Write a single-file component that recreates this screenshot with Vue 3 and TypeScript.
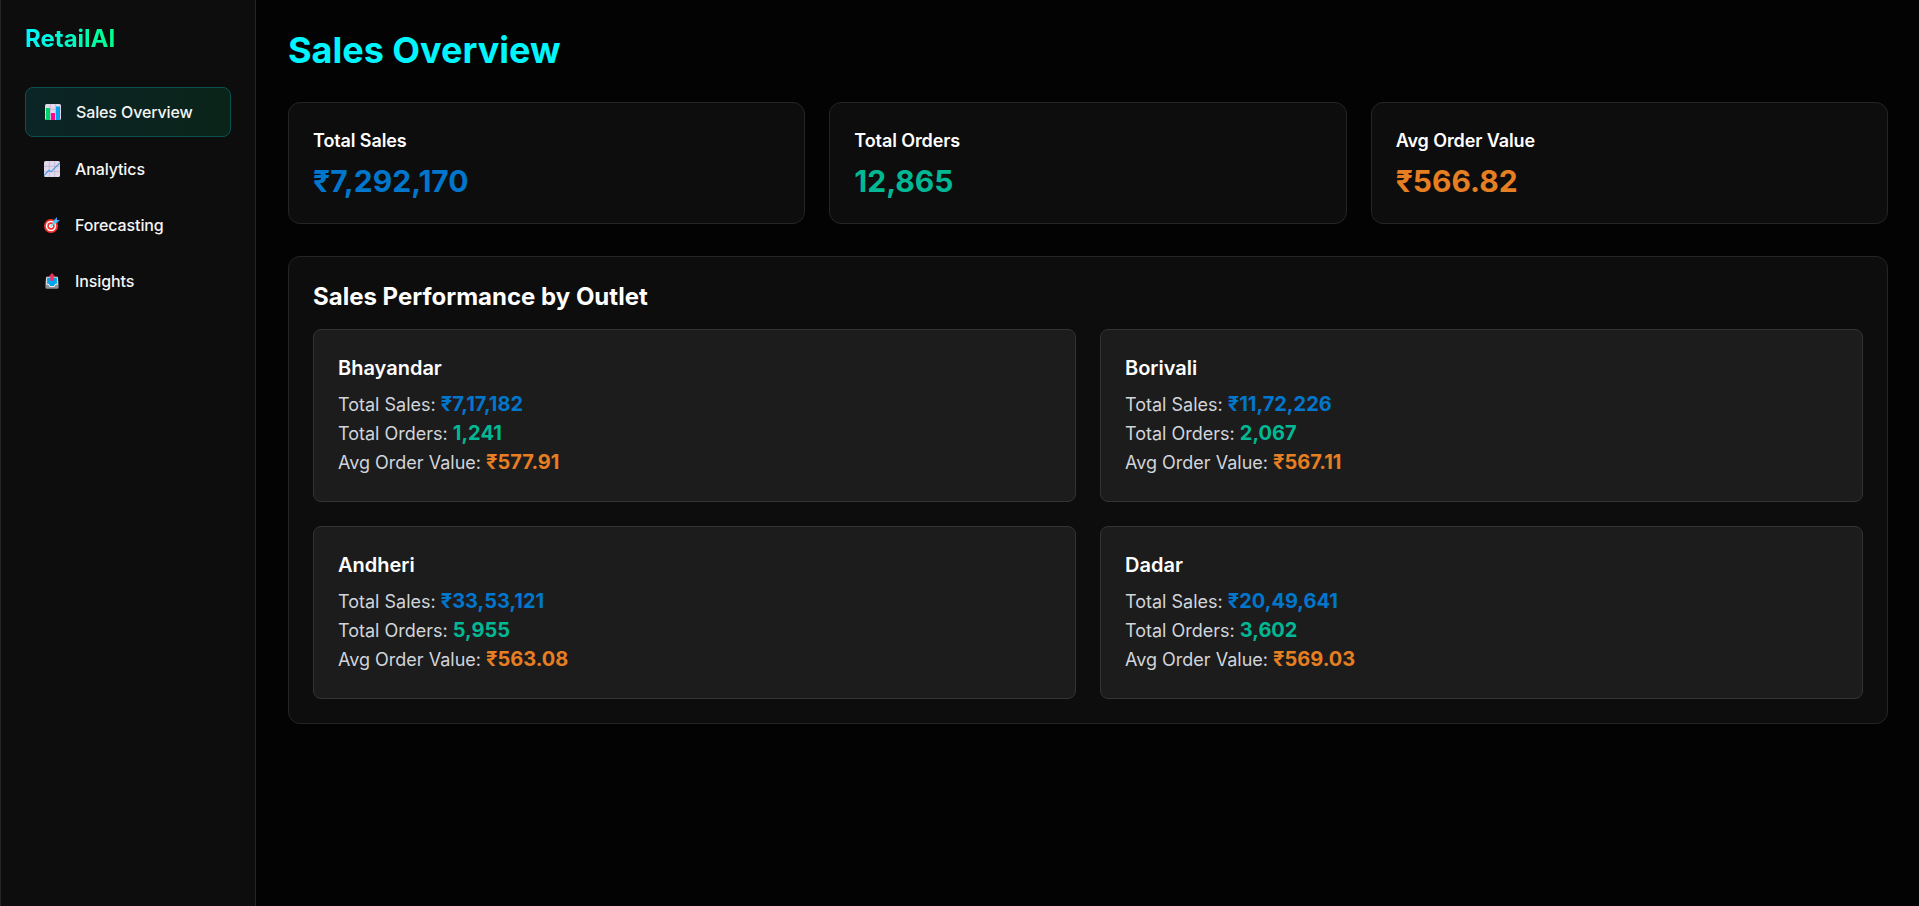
<script setup lang="ts">
interface Stat { label: string; value: string; tone: string }
interface Outlet { name: string; sales: string; orders: string; average: string }

const nav: { id: string; label: string }[] = [
  { id: 'overview', label: 'Sales Overview' },
  { id: 'analytics', label: 'Analytics' },
  { id: 'forecasting', label: 'Forecasting' },
  { id: 'insights', label: 'Insights' },
]
const active = 'overview'

const stats: Stat[] = [
  { label: 'Total Sales', value: '₹7,292,170', tone: 'blue' },
  { label: 'Total Orders', value: '12,865', tone: 'green' },
  { label: 'Avg Order Value', value: '₹566.82', tone: 'orange' },
]

const outlets: Outlet[] = [
  { name: 'Bhayandar', sales: '₹7,17,182', orders: '1,241', average: '₹577.91' },
  { name: 'Borivali', sales: '₹11,72,226', orders: '2,067', average: '₹567.11' },
  { name: 'Andheri', sales: '₹33,53,121', orders: '5,955', average: '₹563.08' },
  { name: 'Dadar', sales: '₹20,49,641', orders: '3,602', average: '₹569.03' },
]
</script>

<template>
  <div class="layout">
    <aside class="sidebar">
      <div class="brand">RetailAI</div>
      <nav class="nav">
        <a v-for="item in nav" :key="item.id" class="nav-item" :class="{ active: item.id === active }">
          <svg v-if="item.id === 'overview'" class="icon" viewBox="0 0 16 16">
            <rect width="16" height="16" rx="1.6" fill="#e3d9ea" />
            <path d="M0 5.3h16M0 10.6h16M5.3 0v16M10.6 0v16" stroke="#bcaec9" stroke-width=".7" />
            <rect x="1" y="4" width="4" height="12" fill="#00d26a" />
            <rect x="6" y="9" width="4" height="7" fill="#f70a8d" />
            <rect x="11" y="2.5" width="4" height="13.5" fill="#00a6ed" />
          </svg>
          <svg v-else-if="item.id === 'analytics'" class="icon" viewBox="0 0 16 16">
            <rect width="16" height="16" rx="1.6" fill="#e1d8ec" />
            <path d="M0 5.3h16M0 10.6h16M5.3 0v16M10.6 0v16" stroke="#c0b3cf" stroke-width=".8" />
            <path d="M.4 14.2 4.7 9.3 7.2 10.7 15.4 2.3" fill="none" stroke="#3f9fe6" stroke-width="1.2" stroke-linecap="round" stroke-linejoin="round" />
          </svg>
          <svg v-else-if="item.id === 'forecasting'" class="icon" viewBox="0 0 16 16">
            <circle cx="7" cy="9" r="7" fill="#f8312f" />
            <circle cx="7" cy="9" r="5.2" fill="#fff" />
            <circle cx="7" cy="9" r="3.7" fill="#f8312f" />
            <circle cx="7" cy="9" r="2.1" fill="#fff" />
            <path d="M7 9 12.5 3.5" stroke="#50e2ff" stroke-width="1.5" stroke-linecap="round" />
            <path d="M10 5.8V3L13 0v3h3l-3 3h-2.7Z" fill="#469bea" />
            <path d="M9.3 6.7 12.8 3.2" stroke="#50cdf5" stroke-width="1.7" />
          </svg>
          <svg v-else class="icon" viewBox="0 0 16 16">
            <path d="M2 4.6A1.2 1.2 0 0 1 3.2 3.4h9.6A1.2 1.2 0 0 1 14 4.6l.6 6.4v3.3a1.5 1.5 0 0 1-1.5 1.5H2.9a1.5 1.5 0 0 1-1.5-1.5V11Z" fill="#8f9297" />
            <path d="M2.2 4.2h11.6v7.6h-2L10.2 14H5.8l-1.6-2.2h-2Z" fill="#e9ecef" />
            <path d="M3.1 4.8h9.8v6h-1.7L9.8 13H6.2l-1.4-2.2H3.1Z" fill="#00a6ed" />
            <path d="M8 .3 10.8 3.4H9.5v4.1h-3V3.4H5.2Z" fill="#f8315e" stroke="#f8315e" stroke-width=".5" stroke-linejoin="round" />
          </svg>
          <span>{{ item.label }}</span>
        </a>
      </nav>
    </aside>

    <main class="main">
      <h1 class="title">Sales Overview</h1>
      <section class="stats">
        <article v-for="stat in stats" :key="stat.label" class="stat">
          <h3 class="stat-label">{{ stat.label }}</h3>
          <p class="stat-value" :class="stat.tone">{{ stat.value }}</p>
        </article>
      </section>
      <section class="panel">
        <h2 class="panel-title">Sales Performance by Outlet</h2>
        <div class="outlets">
          <article v-for="outlet in outlets" :key="outlet.name" class="outlet">
            <h3 class="outlet-name">{{ outlet.name }}</h3>
            <p class="row">Total Sales: <b class="blue">{{ outlet.sales }}</b></p>
            <p class="row">Total Orders: <b class="green">{{ outlet.orders }}</b></p>
            <p class="row">Avg Order Value: <b class="orange">{{ outlet.average }}</b></p>
          </article>
        </div>
      </section>
    </main>
  </div>
</template>

<style>
body { background: #030303; }
</style>

<style scoped>
* { box-sizing: border-box; margin: 0; }
.layout {
  display: flex;
  height: 100vh;
  overflow: hidden;
  font-family: Inter, "Liberation Sans", sans-serif;
  color: #fff;
  background: #030303;
}
.sidebar {
  flex: none;
  width: 256px;
  padding: 23px 24px 24px;
  background: #0d0d0d;
  border: solid #252525;
  border-width: 0 1px;
}
.brand {
  width: fit-content;
  margin-bottom: 32px;
  font-size: 24px;
  line-height: 32px;
  font-weight: 700;
  color: transparent;
  background: linear-gradient(90deg, #00f5ff, #00ff88);
  background-clip: text;
}
.nav { display: flex; flex-direction: column; gap: 8px; }
.nav-item {
  display: flex;
  align-items: center;
  gap: 15px;
  height: 48px;
  padding: 0 19px;
  border-radius: 8px;
  font-size: 16px;
  font-weight: 500;
  letter-spacing: -0.12px;
  color: #f5f5f5;
}
.nav-item.active {
  height: 50px;
  border: 1px solid #0a5251;
  background: linear-gradient(90deg, #0b2426, #0b2419);
}
.icon { width: 16px; height: 16px; flex: none; }
.main { flex: 1; min-width: 0; padding: 30px 31px 30px 32px; }
.title {
  margin-bottom: 32px;
  font-size: 36px;
  line-height: 40px;
  font-weight: 700;
  color: #00f5ff;
}
.stats {
  display: grid;
  grid-template-columns: repeat(3, 1fr);
  gap: 24px;
  margin-bottom: 32px;
}
.stat, .panel {
  padding: 24px;
  border: 1px solid #252525;
  border-radius: 12px;
  background: #0d0d0d;
}
.stat-label {
  margin-bottom: 8px;
  font-size: 18px;
  line-height: 28px;
  font-weight: 600;
  letter-spacing: -0.1px;
}
.stat-value { font-size: 30px; line-height: 36px; font-weight: 700; }
.panel-title {
  margin-bottom: 16px;
  font-size: 24px;
  line-height: 32px;
  font-weight: 700;
}
.outlets { display: grid; grid-template-columns: repeat(2, 1fr); gap: 24px; }
.outlet {
  padding: 24px;
  border: 1px solid #333;
  border-radius: 8px;
  background: #1c1c1c;
}
.outlet-name {
  margin-bottom: 8px;
  font-size: 20px;
  line-height: 28px;
  font-weight: 600;
}
.row { height: 29px; font-size: 18px; line-height: 29px; color: #d1d5db; }
.row b { font-size: 20px; line-height: 28px; font-weight: 700; }
.blue { color: #0077cc; }
.green { color: #00b894; }
.orange { color: #e67e22; }
</style>
